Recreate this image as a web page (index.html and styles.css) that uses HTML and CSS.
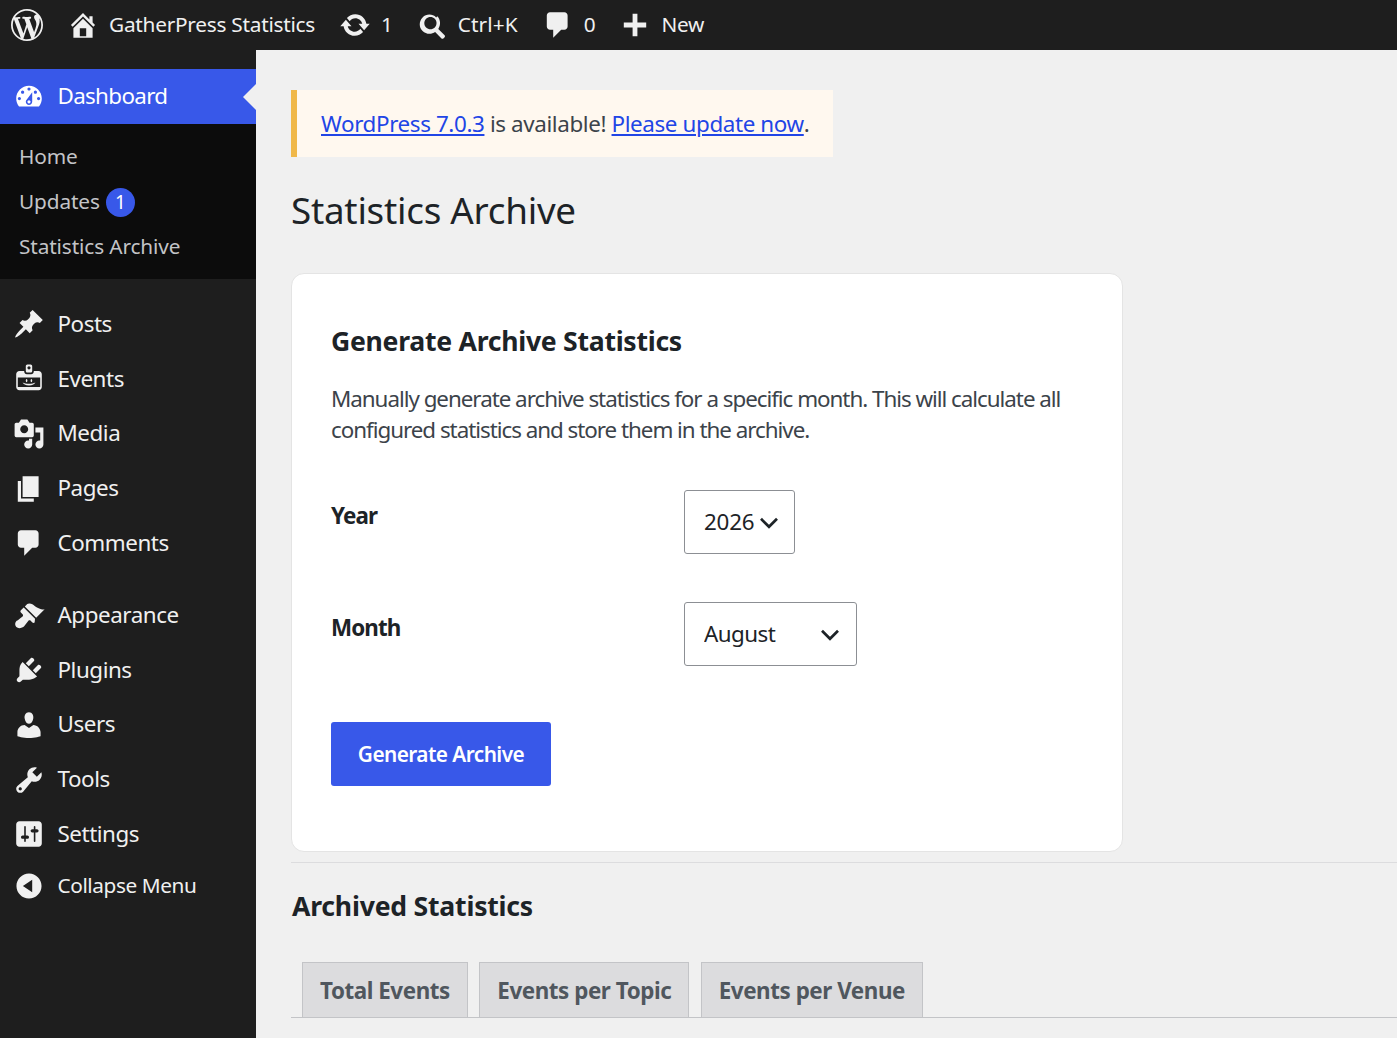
FILE: index.html
```html
<!DOCTYPE html>
<html lang="en">
<head>
<meta charset="utf-8">
<title>Statistics Archive</title>
<link rel="stylesheet" href="styles.css">
</head>
<body>
<header class="topbar">
  <svg class="ico" viewBox="0 0 20 20"><path d="M20 10c0-5.51-4.49-10-10-10C4.48 0 0 4.49 0 10c0 5.52 4.48 10 10 10 5.51 0 10-4.48 10-10zM7.78 15.37L4.37 6.22c.55-.02 1.17-.08 1.17-.08.5-.06.44-1.13-.06-1.11 0 0-1.45.11-2.37.11-.18 0-.37 0-.58-.01C4.12 2.69 6.87 1.11 10 1.11c2.33 0 4.45.87 6.05 2.34-.68-.11-1.65.39-1.65 1.58 0 .74.45 1.36.9 2.1.35.61.55 1.36.55 2.46 0 1.49-1.4 5-1.4 5l-3.03-8.37c.54-.02.82-.17.82-.17.5-.05.44-1.25-.06-1.22 0 0-1.44.12-2.38.12-.87 0-2.33-.12-2.33-.12-.5-.03-.56 1.2-.06 1.22l.92.08 1.26 3.41zM17.41 10c.24-.64.74-1.87.43-4.25.7 1.29 1.05 2.71 1.05 4.25 0 3.29-1.73 6.24-4.4 7.78.97-2.59 1.94-5.2 2.92-7.78zM6.1 18.09C3.12 16.65 1.11 13.53 1.11 10c0-1.3.23-2.48.72-3.59C3.25 10.3 4.67 14.2 6.1 18.09zm4.03-6.63l2.58 6.98c-.86.29-1.76.45-2.71.45-.79 0-1.57-.11-2.29-.33.81-2.38 1.62-4.74 2.42-7.1z"/></svg>
  <a class="bar-item" href="#"><svg class="ico" viewBox="0 0 20 20"><path d="M16 8.5l1.53 1.53-1.06 1.06L10 4.62l-6.47 6.47-1.06-1.06L10 2.5l4 4v-2h2v4zm-6-2.46l6 5.99V18H4v-5.97zM12 17v-5H8v5h4z"/></svg><span>GatherPress Statistics</span></a>
  <a class="bar-item" href="#"><svg class="ico" viewBox="0 0 20 20"><path d="M10.2 3.28c3.53 0 6.43 2.61 6.92 6h2.08l-3.5 4-3.5-4h2.32c-.45-1.97-2.21-3.45-4.32-3.45-1.45 0-2.73.71-3.54 1.78L4.95 5.66C6.23 4.2 8.11 3.28 10.2 3.28zm-.4 13.44c-3.52 0-6.43-2.61-6.92-6H.8l3.5-4c1.17 1.33 2.33 2.67 3.5 4H5.48c.45 1.97 2.21 3.45 4.32 3.45 1.45 0 2.73-.71 3.54-1.78l1.71 1.95c-1.28 1.46-3.15 2.38-5.25 2.38z"/></svg><span>1</span></a>
  <a class="bar-item bar-search" href="#"><svg class="ico" viewBox="0 0 20 20"><path d="M12.14 4.78c1.94 1.94 2.13 4.99.59 7.2l3.62 3.62c.29.29.29.78 0 1.07l-.71.7c-.29.3-.78.3-1.07 0l-3.62-3.62c-2.2 1.53-5.25 1.35-7.19-.59-2.14-2.14-2.14-5.63 0-7.78 2.15-2.14 5.63-2.14 7.78 0zm-1.41 6.36c1.36-1.36 1.36-3.58 0-4.95-1.37-1.36-3.59-1.36-4.95 0-1.37 1.37-1.37 3.59 0 4.95 1.36 1.37 3.58 1.37 4.95 0z"/></svg><span>Ctrl+K</span></a>
  <a class="bar-item" href="#"><svg class="ico" viewBox="0 0 20 20"><path d="M5 2h9c1.1 0 2 .9 2 2v7c0 1.1-.9 2-2 2h-2l-5 5v-5H5c-1.1 0-2-.9-2-2V4c0-1.1.9-2 2-2z"/></svg><span>0</span></a>
  <a class="bar-item" href="#"><svg class="ico" viewBox="0 0 20 20"><path d="M17 8.5v3h-5.5V17h-3v-5.5H3v-3h5.5V3h3v5.5z"/></svg><span>New</span></a>
</header>
<div class="shell">
  <nav class="sidebar">
    <a class="menu-item current" href="#"><svg class="ico" viewBox="0 0 20 20"><path d="M3.76 16h12.48c1.1-1.37 1.76-3.11 1.76-5 0-4.42-3.58-8-8-8s-8 3.58-8 8c0 1.89.66 3.63 1.76 5zM10 4c.55 0 1 .45 1 1s-.45 1-1 1-1-.45-1-1 .45-1 1-1zM6 6c.55 0 1 .45 1 1s-.45 1-1 1-1-.45-1-1 .45-1 1-1zm8 0c.55 0 1 .45 1 1s-.45 1-1 1-1-.45-1-1 .45-1 1-1zm-5.37 5.55L12 7v6c0 1.1-.9 2-2 2s-2-.9-2-2c0-.57.24-1.08.63-1.45zM4 10c.55 0 1 .45 1 1s-.45 1-1 1-1-.45-1-1 .45-1 1-1zm12 0c.55 0 1 .45 1 1s-.45 1-1 1-1-.45-1-1 .45-1 1-1zm-5 3c0-.55-.45-1-1-1s-1 .45-1 1 .45 1 1 1 1-.45 1-1z"/></svg><span>Dashboard</span></a>
    <div class="submenu">
      <a href="#">Home</a>
      <a href="#">Updates <span class="badge">1</span></a>
      <a href="#">Statistics Archive</a>
    </div>
    <div class="group">
      <a class="menu-item" href="#"><svg class="ico" viewBox="0 0 20 20"><path d="M10.44 3.02l1.82-1.82 6.36 6.35-1.83 1.82c-1.05-.68-2.48-.57-3.41.36l-.75.75c-.92.93-1.04 2.35-.35 3.41l-1.83 1.82-2.41-2.41-2.8 2.79c-.42.42-3.38 2.71-3.8 2.29s1.86-3.39 2.28-3.81l2.79-2.79L4.1 9.36l1.83-1.82c1.05.69 2.48.57 3.4-.36l.75-.75c.93-.92 1.05-2.35.36-3.41z"/></svg><span>Posts</span></a>
      <a class="menu-item" href="#"><svg class="ico" viewBox="0 0 20 20"><path d="M12 5V2c0-.55-.45-1-1-1H9c-.55 0-1 .45-1 1v3c0 .55.45 1 1 1h2c.55 0 1-.45 1-1zm-2-3c.55 0 1 .45 1 1s-.45 1-1 1-1-.45-1-1 .45-1 1-1zm8 13V7c0-1.1-.9-2-2-2h-3v.33C13 6.25 12.25 7 11.33 7H8.67C7.75 7 7 6.25 7 5.33V5H4c-1.1 0-2 .9-2 2v8c0 1.1.9 2 2 2h12c1.1 0 2-.9 2-2zm-1-6v6H3V9h14zm-8 2c0-.55-.22-1-.5-1s-.5.45-.5 1 .22 1 .5 1 .5-.45.5-1zm3 0c0-.55-.22-1-.5-1s-.5.45-.5 1 .22 1 .5 1 .5-.45.5-1zm-5.96 1.21c.92.48 2.34.79 3.96.79s3.04-.31 3.96-.79c-.21 1-1.89 1.79-3.96 1.79s-3.75-.79-3.96-1.79z"/></svg><span>Events</span></a>
      <a class="menu-item" href="#"><svg class="ico" viewBox="0 0 20 20"><path d="M13 11V4c0-.55-.45-1-1-1h-1.67L9 1H5L3.67 3H2c-.55 0-1 .45-1 1v7c0 .55.45 1 1 1h10c.55 0 1-.45 1-1zM7 4.5c1.38 0 2.5 1.12 2.5 2.5S8.38 9.5 7 9.5 4.5 8.38 4.5 7 5.62 4.5 7 4.5zM14 6h5v10.5c0 1.38-1.12 2.5-2.5 2.5S14 17.88 14 16.5s1.12-2.5 2.5-2.5c.17 0 .34.02.5.05V9h-3V6zm-4 8.05V13h2v3.5c0 1.38-1.12 2.5-2.5 2.5S7 17.88 7 16.5 8.12 14 9.5 14c.17 0 .34.02.5.05z"/></svg><span>Media</span></a>
      <a class="menu-item" href="#"><svg class="ico" viewBox="0 0 20 20"><path d="M6 15V2h10v13H6zm-1 1h8v2H3V5h2v11z"/></svg><span>Pages</span></a>
      <a class="menu-item" href="#"><svg class="ico" viewBox="0 0 20 20"><path d="M5 2h9c1.1 0 2 .9 2 2v7c0 1.1-.9 2-2 2h-2l-5 5v-5H5c-1.1 0-2-.9-2-2V4c0-1.1.9-2 2-2z"/></svg><span>Comments</span></a>
    </div>
    <div class="group">
      <a class="menu-item" href="#"><svg class="ico" viewBox="0 0 20 20"><path d="M14.48 11.06L7.41 3.99l1.5-1.5c.5-.56 2.3-.47 3.51.32 1.21.8 1.43 1.28 2.91 2.1 1.18.64 2.45 1.26 4.45.85zm-.71.71L6.7 4.7 4.93 6.47c-.39.39-.39 1.02 0 1.41l1.06 1.06c.39.39.39 1.03 0 1.42-.6.6-1.43 1.11-2.21 1.69-.35.26-.7.53-1.01.84C1.43 13.23.78 15.6 2.09 16.91c1.3 1.31 3.68.66 5.02-.68.31-.31.58-.66.84-1.01.58-.78 1.09-1.61 1.69-2.21.39-.39 1.02-.39 1.41 0l1.06 1.06c.39.39 1.02.39 1.41 0z"/></svg><span>Appearance</span></a>
      <a class="menu-item" href="#"><svg class="ico" viewBox="0 0 20 20"><path d="M13.11 4.36L9.87 7.6 8 5.73l3.24-3.24c.35-.34 1.05-.2 1.56.32.52.51.66 1.21.31 1.55zm-8 1.77l.91-1.12 9.01 9.01-1.19.84c-.71.71-2.63 1.16-3.82 1.16H6.14L4.9 17.26c-.59.59-1.54.59-2.12 0-.59-.58-.59-1.53 0-2.12l1.24-1.24v-3.88c0-1.13.4-3.19 1.09-3.89zm7.26 3.97l3.24-3.24c.34-.35 1.04-.21 1.55.31.52.51.66 1.21.31 1.55l-3.24 3.25z"/></svg><span>Plugins</span></a>
      <a class="menu-item" href="#"><svg class="ico" viewBox="0 0 20 20"><path d="M10 9.25c-2.27 0-2.73-3.44-2.73-3.44C7 4.02 7.82 2 9.97 2c2.16 0 2.98 2.02 2.71 3.81 0 0-.41 3.44-2.68 3.44zm0 2.57L12.72 10c2.39 0 4.52 2.33 4.52 4.53v2.49s-3.65 1.13-7.24 1.13c-3.65 0-7.24-1.13-7.24-1.13v-2.49c0-2.25 1.94-4.48 4.47-4.48z"/></svg><span>Users</span></a>
      <a class="menu-item" href="#"><svg class="ico" viewBox="0 0 20 20"><path d="M16.68 9.77c-1.34 1.34-3.3 1.67-4.95.99l-5.41 6.52c-.99.99-2.59.99-3.58 0s-.99-2.59 0-3.57l6.52-5.42c-.68-1.65-.35-3.61.99-4.95 1.28-1.28 3.12-1.62 4.72-1.06l-2.89 2.89 2.82 2.82 2.86-2.87c.53 1.58.18 3.39-1.08 4.65zM3.81 16.21c.4.39 1.04.39 1.43 0 .4-.4.4-1.04 0-1.43-.39-.4-1.03-.4-1.43 0-.39.39-.39 1.03 0 1.43z"/></svg><span>Tools</span></a>
      <a class="menu-item" href="#"><svg class="ico" viewBox="0 0 20 20"><path d="M18 16V4c0-1.1-.9-2-2-2H4c-1.1 0-2 .9-2 2v12c0 1.1.9 2 2 2h12c1.1 0 2-.9 2-2zM8 11h1c.55 0 1 .45 1 1s-.45 1-1 1H8v1.5c0 .28-.22.5-.5.5s-.5-.22-.5-.5V13H6c-.55 0-1-.45-1-1s.45-1 1-1h1V5.5c0-.28.22-.5.5-.5s.5.22.5.5V11zm5-2h-1c-.55 0-1-.45-1-1s.45-1 1-1h1V5.5c0-.28.22-.5.5-.5s.5.22.5.5V7h1c.55 0 1 .45 1 1s-.45 1-1 1h-1v5.5c0 .28-.22.5-.5.5s-.5-.22-.5-.5V9z"/></svg><span>Settings</span></a>
    </div>
    <a class="menu-item collapse" href="#"><svg class="ico" viewBox="0 0 20 20"><path d="M10 2.16c4.33 0 7.84 3.51 7.84 7.84s-3.51 7.84-7.84 7.84S2.16 14.33 2.16 10 5.71 2.16 10 2.16zm2 11.72V6.12L6.18 9.97z"/></svg><span>Collapse Menu</span></a>
  </nav>
  <main class="content">
    <div class="notice"><a href="#">WordPress 7.0.3</a> is available! <a href="#">Please update now</a>.</div>
    <h1 class="page-title">Statistics Archive</h1>
    <section class="card">
      <h2 class="card-title">Generate Archive Statistics</h2>
      <p class="card-text">Manually generate archive statistics for a specific month. This will calculate all configured statistics and store them in the archive.</p>
      <div class="field">
        <label class="field-label" for="year">Year</label>
        <select class="select select-year" id="year"><option>2026</option></select>
      </div>
      <div class="field">
        <label class="field-label" for="month">Month</label>
        <select class="select select-month" id="month"><option>August</option></select>
      </div>
      <button class="primary" type="button">Generate Archive</button>
    </section>
    <hr class="rule">
    <h2 class="section-title">Archived Statistics</h2>
    <div class="tabs">
      <a class="tab" href="#">Total Events</a>
      <a class="tab" href="#">Events per Topic</a>
      <a class="tab" href="#">Events per Venue</a>
    </div>
  </main>
</div>
</body>
</html>
```
FILE: styles.css
```css
* { box-sizing: border-box; }
html, body { margin: 0; height: 100%; overflow: hidden; }
body {
  background: #f0f0f0;
  color: #3c434a;
  font-family: "Noto Sans", "Open Sans", sans-serif;
  font-size: 22.4px;
  letter-spacing: -0.025em;
}
a { text-decoration: none; color: inherit; }
.ico { width: 32px; height: 32px; fill: currentColor; flex: none; display: block; }

.topbar {
  height: 50px;
  background: #1e1e1e;
  color: #f0f0f0;
  display: flex;
  align-items: center;
  gap: 24px;
  padding-left: 11px;
  font-size: 20.8px;
  letter-spacing: -0.012em;
}
.bar-item { display: flex; align-items: center; gap: 10px; }
.bar-item span { padding-bottom: 2px; }
.bar-search { gap: 7px; margin-left: -1px; letter-spacing: 0.005em; }
.bar-search .ico { width: 35px; height: 35px; }

.shell { display: flex; height: calc(100% - 50px); }
.sidebar {
  width: 256px;
  flex: none;
  background: #1e1e1e;
  color: #f0f0f0;
  padding-top: 19px;
}
.menu-item {
  height: 54.72px;
  display: flex;
  align-items: center;
  gap: 12.5px;
  padding-left: 13px;
  letter-spacing: -0.02em;
}
.menu-item span { padding-bottom: 2px; }
.menu-item.current {
  position: relative;
  height: 55px;
  background: #3858e9;
  color: #fff;
  letter-spacing: -0.03em;
}
.menu-item.current::after {
  content: "";
  position: absolute;
  right: 0;
  top: 15px;
  border: 13px solid transparent;
  border-left: 0;
  border-right: 13px solid #f0f0f0;
}
.submenu {
  background: #0c0c0c;
  color: #c3c4c7;
  padding: 11px 0 10px 19px;
  font-size: 20.8px;
  letter-spacing: -0.006em;
}
.submenu a { display: flex; align-items: center; height: 44.8px; gap: 6px; padding-bottom: 2px; }
.badge {
  width: 29px;
  height: 29px;
  margin-top: 2px;
  border-radius: 50%;
  background: #3858e9;
  color: #fff;
  font-size: 19px;
  display: flex;
  align-items: center;
  justify-content: center;
}
.group { margin-top: 17.6px; }
.collapse { height: 48px; font-size: 20.8px; letter-spacing: -0.02em; }

.content { flex: 1; min-width: 0; padding: 40px 0 0 35px; }
.notice {
  width: 542px;
  height: 67px;
  background: #fff8ef;
  border-left: 6px solid #f0b849;
  padding-left: 24px;
  display: flex;
  align-items: center;
  white-space: pre;
  letter-spacing: -0.017em;
}
.notice a { color: #2145e6; text-decoration: underline; }
.page-title {
  margin: 28px 0 38px;
  font-size: 36.8px;
  line-height: 50px;
  font-weight: 400;
  color: #1d2327;
  letter-spacing: -0.007em;
}
.card {
  width: 832px;
  height: 579px;
  background: #fff;
  border: 1px solid #e4e4e4;
  border-radius: 13px;
  padding: 49px 39px 0;
}
.card-title {
  margin: 0 0 24px;
  font-size: 26.6px;
  line-height: 36px;
  font-weight: 700;
  color: #1d2327;
  letter-spacing: -0.01em;
}
.card-text { margin: 0 0 44px; line-height: 31.4px; letter-spacing: -0.046em; }
.field { display: flex; align-items: flex-start; margin-bottom: 48px; }
.field-label {
  width: 353px;
  flex: none;
  font-weight: 700;
  color: #1d2327;
  padding-top: 10px;
  letter-spacing: -0.04em;
}
.select {
  appearance: none;
  height: 64px;
  border: 1px solid #8c8f94;
  border-radius: 3px;
  padding: 0 0 0 19px;
  font: inherit;
  letter-spacing: inherit;
  color: #1d2327;
  background: #fff url("data:image/svg+xml,%3Csvg xmlns='http://www.w3.org/2000/svg' viewBox='0 0 20 20'%3E%3Cpath d='M5 8l5 5 5-5' fill='none' stroke='%231d2327' stroke-width='1.7'/%3E%3C/svg%3E") no-repeat right 9.5px center / 32px 32px;
}
.select-year { width: 111px; letter-spacing: -0.01em; }
.select-month { width: 173px; background-position: right 10px center; }
.primary {
  display: block;
  width: 220px;
  height: 64px;
  margin-top: 56px;
  border: 0;
  border-radius: 3px;
  background: #3858e9;
  color: #fff;
  font: inherit;
  font-size: 20.8px;
  font-weight: 600;
  letter-spacing: inherit;
}
.field:last-of-type { margin-bottom: 0; }
.rule { margin: 10px 0 0; border: 0; border-top: 1px solid #dcdcde; }
.section-title {
  margin: 24px 0 37px 1px;
  font-size: 26.6px;
  line-height: 38px;
  font-weight: 700;
  color: #1d2327;
  letter-spacing: -0.008em;
}
.tabs {
  display: flex;
  gap: 11.5px;
  padding-left: 11px;
  height: 56px;
  border-bottom: 1px solid #c3c4c7;
}
.tab {
  height: 56px;
  padding: 0 17px;
  display: flex;
  align-items: center;
  background: #dcdcde;
  border: 1px solid #c3c4c7;
  font-weight: 700;
  color: #50575e;
  letter-spacing: -0.02em;
}
```
